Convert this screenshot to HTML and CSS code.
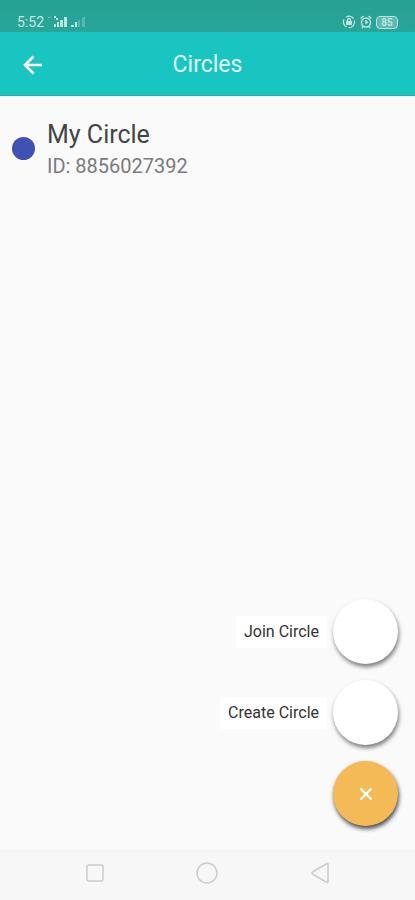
FILE: index.html
```html
<!DOCTYPE html>
<html lang="en">
<head>
<meta charset="utf-8">
<meta name="viewport" content="width=device-width, initial-scale=1">
<title>Circles</title>
<link rel="stylesheet" href="styles.css">
</head>
<body>
<div class="status">
  <div class="status-group">
    <span class="clock">5:52</span>
    <svg class="signals" width="38" height="14" viewBox="0 0 38 14" fill="#fff" aria-hidden="true">
      <path d="M0 2h3v1H0z" opacity=".3"/>
      <path d="M6 1h2v2H6zM8 3h2v2H8z" opacity=".7"/>
      <path d="M6 9h2v3H6zM9 7h2v5H9zM12 5h3v7h-3zM16 2h3v10h-3z" opacity=".7"/>
      <path d="M23 10h3v2h-3zM27 7h2v5h-2z" opacity=".7"/>
      <path d="M30 5h2v7h-2zM34 2h3v10h-3z" opacity=".22"/>
    </svg>
  </div>
  <div class="status-group status-right">
    <svg width="14" height="14" viewBox="0 0 14 14" fill="none" stroke="#fff" stroke-width="1.300" aria-hidden="true">
      <path d="M4.500 12A5.700 5.700 0 0 1 2 4.200M4 2a5.700 5.700 0 0 1 7.500 1.500M12.400 5.500A5.700 5.700 0 0 1 6.500 12.700"/>
      <path d="M5.500 6V5a1.500 1.500 0 0 1 3 0v1"/>
      <path d="M4 6h6v4H4z" fill="#fff" stroke="none"/>
    </svg>
    <svg width="12" height="14" viewBox="0 0 12 14" fill="none" stroke="#fff" stroke-width="1.500" aria-hidden="true">
      <circle cx="6" cy="7.500" r="4.500"/>
      <path d="M6 5v3l2-1M.5 3.500 3.500 1.200M11.500 3.500 8.500 1.200M3 11.500 2 13M9 11.500l1 1.500"/>
    </svg>
    <span class="battery">85</span>
  </div>
</div>
<header class="bar">
  <button class="back" type="button" aria-label="Back">
    <svg width="20" height="20" viewBox="0 0 20 20" fill="none" stroke="#fff" stroke-width="2.600" aria-hidden="true">
      <path d="M19 10H3M10.500 1.500 2 10l8.500 8.500"/>
    </svg>
  </button>
  <h1>Circles</h1>
</header>
<main>
  <ul class="circles">
    <li>
      <span class="dot"></span>
      <div>
        <h2>My Circle</h2>
        <p>ID: 8856027392</p>
      </div>
    </li>
  </ul>
  <div class="actions">
    <div class="action">
      <label for="join">Join Circle</label>
      <button class="fab" id="join" type="button"></button>
    </div>
    <div class="action">
      <label for="create">Create Circle</label>
      <button class="fab" id="create" type="button"></button>
    </div>
    <button class="fab close" type="button" aria-label="Close menu">
      <svg width="14" height="14" viewBox="0 0 14 14" stroke="#fff" stroke-width="2.300" aria-hidden="true">
        <path d="m1.500 1.500 11 11m0-11-11 11"/>
      </svg>
    </button>
  </div>
</main>
<nav class="system">
  <button type="button" aria-label="Recent apps">
    <svg width="24" height="24" viewBox="0 0 24 24"><rect x="4" y="4" width="16" height="16" rx="1.500"/></svg>
  </button>
  <button type="button" aria-label="Home">
    <svg width="24" height="24" viewBox="0 0 24 24"><circle cx="12" cy="12" r="10"/></svg>
  </button>
  <button type="button" aria-label="Go back">
    <svg width="24" height="24" viewBox="0 0 24 24"><path d="M19 2.500 4.500 11q-1.500 1 0 2L19 21.500q1 .5 1-1v-17q0-1.500-1-1z"/></svg>
  </button>
</nav>
</body>
</html>
```
FILE: styles.css
```css
* {
  box-sizing: border-box;
  margin: 0;
  padding: 0;
}

body {
  min-height: 100vh;
  display: flex;
  flex-direction: column;
  background: #fafafa;
  font-family: Roboto, "Liberation Sans", sans-serif;
}

button {
  border: 0;
  background: none;
  display: grid;
  place-items: center;
}

.status {
  height: 32px;
  padding: 12px 17px 0;
  display: flex;
  justify-content: space-between;
  background: linear-gradient(#25a093, #2aa699);
}

.status-group {
  display: flex;
  align-items: center;
  gap: 4px;
}

.status-right {
  opacity: 0.7;
}

.clock {
  font-size: 14px;
  line-height: 20px;
  color: #c5e8e3;
}

.battery {
  width: 22px;
  height: 13px;
  border: 1px solid #fff;
  border-radius: 4px;
  background: rgba(255, 255, 255, 0.35);
  color: #fff;
  font-size: 10px;
  font-weight: 700;
  line-height: 11px;
  text-align: center;
}

.bar {
  height: 64px;
  padding: 2px 16px 0;
  display: grid;
  grid-template-columns: 34px 1fr 34px;
  align-items: center;
  background: #19c5c1;
  border-bottom: 1px solid #18b5b1;
}

.back {
  height: 34px;
}

h1 {
  color: #e2fbfa;
  font-size: 23px;
  font-weight: 400;
  line-height: 28px;
  text-align: center;
}

main {
  flex: 1;
  display: flex;
  flex-direction: column;
  justify-content: space-between;
}

.circles {
  padding: 21px 12px;
  list-style: none;
}

.circles li {
  display: flex;
  align-items: center;
  gap: 12px;
}

.dot {
  width: 23px;
  height: 23px;
  border-radius: 50%;
  background: #3f51b5;
}

h2 {
  color: #444;
  font-size: 25px;
  font-weight: 400;
  line-height: 36px;
}

p {
  color: #7b7b7b;
  font-size: 20px;
  line-height: 26px;
}

.actions {
  padding: 0 17px 23px;
  display: flex;
  flex-direction: column;
  align-items: flex-end;
  gap: 16px;
}

.action {
  display: flex;
  align-items: center;
  gap: 6px;
}

label {
  padding: 6px 8px;
  background: #fff;
  color: #333;
  font-size: 16px;
  line-height: 20px;
}

.fab {
  width: 65px;
  height: 65px;
  border-radius: 50%;
  background: #fff;
  box-shadow: 1px 3px 4px rgba(0, 0, 0, 0.5);
}

.close {
  background: #f4ba55;
  box-shadow: 1px 3px 4px rgba(0, 0, 0, 0.7);
}

.system {
  height: 51px;
  padding: 0 39px 4px;
  display: grid;
  grid-template-columns: repeat(3, 1fr);
  align-items: center;
  background: #f7f7f7;
}

.system svg {
  fill: none;
  stroke: #ccc;
  stroke-width: 1.5;
}
```
